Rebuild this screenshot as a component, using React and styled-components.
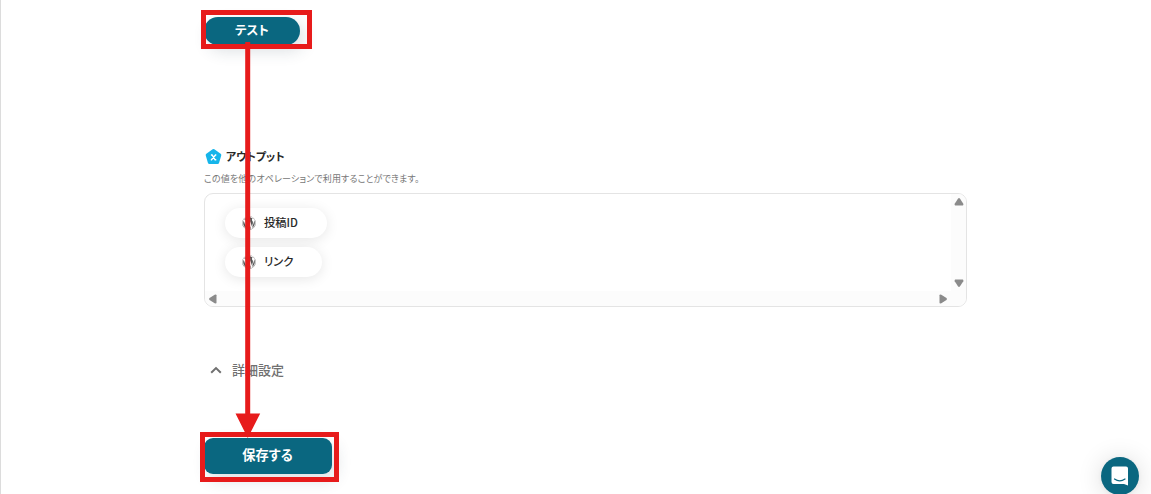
import React from "react"
import styled, { createGlobalStyle } from "styled-components"
import { FaWordpress } from "react-icons/fa"

const GlobalStyle = createGlobalStyle`
  * {
    box-sizing: border-box;
  }
  body {
    margin: 0;
    background: #fff;
    font-family: "Noto Sans CJK JP", sans-serif;
    font-feature-settings: "palt";
    color: #282828;
  }
`

const Page = styled.main`
  position: relative;
  height: 494px;
  overflow: hidden;
  border-left: 1px solid #dcdcdc;
  padding: 17px 0 0 203px;
  display: flex;
  flex-direction: column;
  align-items: flex-start;
`

const Button = styled.button`
  width: ${({ $large }) => ($large ? 128 : 96)}px;
  height: ${({ $large }) => ($large ? 36 : 28)}px;
  padding: ${({ $large }) => ($large ? "0 1px 2px 0" : "0 0 2px")};
  border: 0;
  border-radius: ${({ $large }) => ($large ? 9 : 14)}px;
  background: #0a6780;
  color: #fff;
  font: inherit;
  font-size: ${({ $large }) => ($large ? 13.2 : 12.5)}px;
  font-weight: 700;
  line-height: 20px;
  box-shadow: 4px 6px 16px rgba(40, 60, 80, 0.16);
`

const Heading = styled.h2`
  display: flex;
  align-items: center;
  gap: 4px;
  height: 18px;
  margin: 103px 0 0 1px;
  font-size: 11px;
  font-weight: 700;
  line-height: 18px;
`

const Description = styled.p`
  height: 14px;
  margin: 6px 0 0;
  font-size: 9px;
  line-height: 14px;
  letter-spacing: 0.14px;
  color: #777;
`

const Panel = styled.section`
  display: grid;
  grid-template-columns: 1fr 15px;
  grid-template-rows: 1fr 15px;
  width: 763px;
  height: 114px;
  margin-top: 7px;
  border: 1px solid #e4e4e4;
  border-radius: 9px;
  overflow: hidden;
`

const Outputs = styled.div`
  display: flex;
  flex-direction: column;
  align-items: flex-start;
  gap: 9px;
  padding: 14px 0 0 20px;
  overflow: hidden;
`

const Pill = styled.div`
  display: flex;
  align-items: center;
  gap: 8px;
  width: ${({ $width }) => $width}px;
  height: 30px;
  flex: none;
  padding-left: 17px;
  border-radius: 15px;
  background: #fff;
  box-shadow: 0 2px 13px rgba(0, 0, 0, 0.1);
  font-size: 11.3px;
  font-weight: 500;
  line-height: 18px;

  svg {
    color: #555;
  }
`

const Label = styled.span`
  padding-bottom: 2px;
`

const Scrollbar = styled.div`
  display: flex;
  flex-direction: ${({ $vertical }) => ($vertical ? "column" : "row")};
  align-items: center;
  justify-content: space-between;
  padding: ${({ $vertical }) => ($vertical ? "3px 0 3px" : "0 3px")};
  background: #fcfcfc;
`

const Corner = styled.div`
  background: #fcfcfc;
`

const Details = styled.div`
  display: flex;
  align-items: center;
  gap: 10px;
  height: 20px;
  margin: 53px 0 0 6px;
  color: #707070;
  font-size: 13px;
  font-weight: 500;
  line-height: 20px;
`

const SaveRow = styled.div`
  display: flex;
  margin-top: 58px;
`

const ChatLauncher = styled.button`
  position: absolute;
  top: 457px;
  right: 12px;
  display: flex;
  align-items: center;
  justify-content: center;
  width: 38px;
  height: 38px;
  padding: 0;
  border: 0;
  border-radius: 50%;
  background: #0a6780;
  box-shadow: 0 1px 5px rgba(0, 0, 0, 0.06), 0 2px 26px rgba(0, 0, 0, 0.14);
`

const Highlight = styled.div`
  position: absolute;
  top: ${({ $top }) => $top}px;
  left: ${({ $left }) => $left}px;
  width: ${({ $width }) => $width}px;
  height: ${({ $height }) => $height}px;
  border: 5px solid #e71b1b;
`

const Arrow = styled.svg`
  position: absolute;
  top: 42px;
  left: 234px;
`

const OutputIcon = () => (
  <svg width="17" height="18" viewBox="0 0 17 18">
    <path
      d="M8.5 2.6L14.8 7L12.6 14.6H4.4L2.2 7Z"
      fill="#16b5ea"
      stroke="#16b5ea"
      strokeWidth="3"
      strokeLinejoin="round"
    />
    <path
      d="M5.9 7h1.2l3 4.8h1.2M11.3 7h-.8l-4 4.8h-.7"
      fill="none"
      stroke="#fff"
      strokeWidth="1.4"
    />
  </svg>
)

const ROTATION = { up: 0, right: 90, down: 180, left: 270 }

const ScrollArrow = ({ direction }) => (
  <svg width="10" height="10" viewBox="0 0 10 10">
    <path
      d="M4.1 1.5Q5 .6 5.9 1.5L9.3 6.7Q9.8 8.5 8.7 8.5H1.3Q.2 8.5 .7 6.7Z"
      fill="#8b8b8b"
      transform={`rotate(${ROTATION[direction]} 5 5)`}
    />
  </svg>
)

const outputs = [
  { label: "投稿ID", width: 102 },
  { label: "リンク", width: 97 },
]

const App = () => (
  <Page>
    <GlobalStyle />
    <Button>テスト</Button>
    <Heading>
      <OutputIcon />
      <Label>アウトプット</Label>
    </Heading>
    <Description>この値を他のオペレーションで利用することができます。</Description>
    <Panel>
      <Outputs>
        {outputs.map(({ label, width }) => (
          <Pill key={label} $width={width}>
            <FaWordpress size={14} />
            <Label>{label}</Label>
          </Pill>
        ))}
      </Outputs>
      <Scrollbar $vertical>
        <ScrollArrow direction="up" />
        <ScrollArrow direction="down" />
      </Scrollbar>
      <Scrollbar>
        <ScrollArrow direction="left" />
        <ScrollArrow direction="right" />
      </Scrollbar>
      <Corner />
    </Panel>
    <Details>
      <svg width="12" height="10" viewBox="0 0 12 10">
        <path d="M1.2 7.8L6 3.1L10.8 7.8" fill="none" stroke="#707070" strokeWidth="2" />
      </svg>
      詳細設定
    </Details>
    <SaveRow>
      <Button $large>保存する</Button>
    </SaveRow>
    <ChatLauncher aria-label="chat">
      <svg width="18" height="20" viewBox="0 0 18 20">
        <path d="M2.5 .5H15Q17 .5 17 2.5V19.5L13 18H2.5Q.5 18 .5 16V2.5Q.5 .5 2.5 .5Z" fill="#fff" />
        <path
          d="M3.5 13Q8.8 16.8 14 13"
          fill="none"
          stroke="#0a6780"
          strokeWidth="1.2"
          strokeLinecap="round"
        />
      </svg>
    </ChatLauncher>
    <Highlight $top={9.5} $left={200} $width={111} $height={39} />
    <Highlight $top={432} $left={199} $width={139.4} $height={50} />
    <Arrow width="26" height="397" viewBox="0 0 26 397">
      <path d="M10.2 0H15.2V371.5H25.2L12.8 396L.5 371.5H10.2Z" fill="#e71b1b" />
    </Arrow>
  </Page>
)

export default App
